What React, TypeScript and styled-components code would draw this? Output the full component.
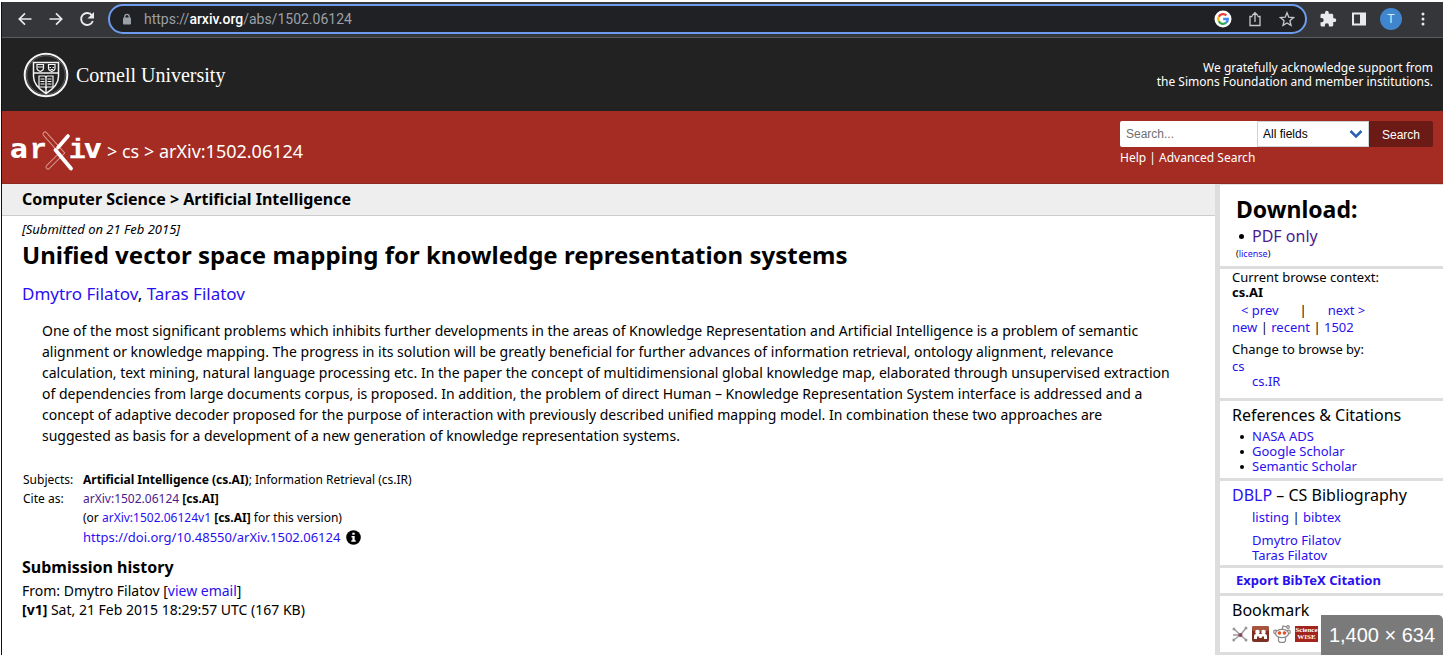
import React from 'react';
import styled, { createGlobalStyle } from 'styled-components';

const sans = `'Noto Sans', 'Open Sans', sans-serif`;
const arial = `'Liberation Sans', Arial, sans-serif`;

const GlobalStyle = createGlobalStyle`
  *, *::before, *::after { box-sizing: border-box; }
  body { margin: 0; background: #fff; color: #000; font-family: ${sans}; font-size: 13px; }
  a { color: #2a0ff0; text-decoration: none; }
  h1, h2, h3, p, ul { margin: 0; padding: 0; }
`;

const Frame = styled.div`
  position: relative;
  margin: 2px 7px 17px 1px;
  border-left: 1px solid #111;
  background: #fff;
`;

/* Browser toolbar */
const Toolbar = styled.div`
  display: flex;
  align-items: center;
  height: 36px;
  padding: 0 10px 2px 13px;
  gap: 11px;
  background: #35363a;
  border-bottom: 1px solid #5a5b5e;
`;

const IconButton = styled.button`
  display: flex;
  align-items: center;
  justify-content: center;
  flex: none;
  width: 20px;
  height: 20px;
  padding: 0;
  border: 0;
  background: none;
  color: #e8eaed;
`;

const AddressBar = styled.div`
  display: flex;
  flex: 1;
  align-items: center;
  height: 30px;
  padding: 0 8px 0 12px;
  gap: 12px;
  border: 2px solid #6c9cf0;
  border-radius: 15px;
  background: #202124;
`;

const Url = styled.div`
  flex: 1;
  font-family: Roboto, ${arial};
  font-size: 14px;
  line-height: 20px;
  color: #9aa0a6;
  b { font-weight: 500; color: #fff; }
`;

const Avatar = styled.button`
  width: 22px;
  height: 22px;
  flex: none;
  padding: 0;
  border: 0;
  border-radius: 50%;
  background: #3f86cf;
  color: #dbe9f8;
  font: 12px/22px ${arial};
`;

/* Site banner */
const Banner = styled.header`
  display: flex;
  align-items: center;
  justify-content: space-between;
  height: 73px;
  padding: 0 10px 0 21px;
  background: #222;
  color: #fff;
`;

const Cornell = styled.a`
  display: flex;
  align-items: center;
  gap: 7px;
  && { color: #fff; }
  font: 20px/28px 'Liberation Serif', serif;
`;

const Support = styled.p`
  text-align: right;
  font-size: 12px;
  line-height: 14px;
`;

const RedBar = styled.div`
  display: flex;
  justify-content: space-between;
  height: 73px;
  padding: 10px 10px 0 8px;
  background: #a42c23;
  border-bottom: 1px solid #8e2a22;
  color: #fff;
  a { color: #fff; }
`;

const Crumbs = styled.div`
  display: flex;
  align-items: center;
  height: 59px;
  gap: 5px;
  font-size: 18px;
  line-height: 24px;
`;

const LogoLink = styled.a`
  display: flex;
`;

const SearchForm = styled.form`
  width: 313px;
  font-size: 12px;
  line-height: 22px;
`;

const SearchRow = styled.div`
  display: flex;
  height: 26px;
  font-family: ${arial};
`;

const SearchInput = styled.input`
  width: 137px;
  padding: 0 6px;
  border: 0;
  border-radius: 2px 0 0 2px;
  background: #fff;
  font: 12px ${arial};
  &::placeholder { color: #6f6f6f; opacity: 1; }
`;

const SelectWrap = styled.label`
  display: grid;
  align-items: center;
  width: 112px;
  border: 1px solid #c9d4d8;
  background: #fff;
  color: #2c62b4;
  select, svg { grid-area: 1 / 1; }
  svg { justify-self: end; margin-right: 5px; pointer-events: none; }
`;

const Select = styled.select`
  appearance: none;
  width: 100%;
  height: 24px;
  padding: 0 5px;
  border: 0;
  background: #fff;
  color: #000;
  font: 12px ${arial};
`;

const SearchButton = styled.button`
  flex: 1;
  padding: 2px 0 0;
  border: 0;
  border-radius: 0 2px 2px 0;
  background: #6b1a15;
  color: #fff;
  font: 12px ${arial};
`;

/* Content */
const Columns = styled.div`
  display: flex;
`;

const Main = styled.main`
  flex: 1;
  min-width: 0;
`;

const Subject = styled.h1`
  height: 32px;
  padding-left: 20px;
  border-bottom: 1px solid #ccc;
  background: #eee;
  font-size: 16px;
  line-height: 31px;
`;

const Article = styled.article`
  padding: 3px 20px 0;
`;

const Dateline = styled.p`
  font-size: 13px;
  line-height: 20px;
  font-style: italic;
`;

const Title = styled.h2`
  font-size: 24px;
  line-height: 32px;
`;

const Authors = styled.p`
  padding-top: 11px;
  font-size: 17px;
  line-height: 24px;
`;

const Abstract = styled.p`
  padding: 14px 0 0 20px;
  font-size: 14px;
  line-height: 21px;
  white-space: nowrap;
`;

const Meta = styled.table`
  margin-top: 24px;
  border-collapse: collapse;
  font-size: 12px;
  line-height: 19px;
  th, td { padding: 0 0 0 1px; text-align: left; vertical-align: top; font-weight: 400; height: 19px; }
  th { width: 60px; }
  td svg { display: block; }
`;

const Doi = styled.div`
  display: flex;
  align-items: center;
  gap: 6px;
  font-size: 13px;
  line-height: 20px;
`;

const History = styled.section`
  padding-top: 7px;
  font-size: 14px;
  line-height: 19px;
  h3 { font-size: 16px; line-height: 27px; }
`;

/* Sidebar */
const Sidebar = styled.aside`
  width: 228px;
  border-left: 5px solid #ddd;
  border-top: 1px solid #ddd;
`;

const Panel = styled.section<{ $h: number; $top?: number; $left?: number }>`
  min-height: ${(p) => p.$h}px;
  padding: ${(p) => p.$top ?? 3}px 0 0 ${(p) => p.$left ?? 12}px;
  border-bottom: 3px solid #ddd;
  font-size: 13px;
  line-height: 15px;
`;

const PanelTitle = styled.h3<{ $big?: boolean }>`
  font-size: ${(p) => (p.$big ? 23 : 16)}px;
  font-weight: ${(p) => (p.$big ? 700 : 400)};
  line-height: ${(p) => (p.$big ? 32 : 22)}px;
`;

const List = styled.ul<{ $big?: boolean }>`
  padding-top: ${(p) => (p.$big ? 0 : 3)}px;
  font-size: ${(p) => (p.$big ? 16 : 13)}px;
  line-height: ${(p) => (p.$big ? 22 : 15)}px;
  list-style: none;
  li { display: flex; align-items: center; padding-left: ${(p) => (p.$big ? 3 : 8)}px; }
  li::before {
    content: '';
    width: ${(p) => (p.$big ? 5 : 4)}px;
    height: ${(p) => (p.$big ? 5 : 4)}px;
    margin-right: 8px;
    border-radius: 50%;
    background: #000;
  }
`;

const Visited = styled.a`
  && { color: #4b1a8f; }
`;

const License = styled.p`
  font-size: 9px;
  line-height: 13px;
`;

const Line = styled.p<{ $indent?: number; $gap?: number; $tall?: boolean }>`
  padding-left: ${(p) => p.$indent ?? 0}px;
  margin-top: ${(p) => p.$gap ?? 0}px;
  line-height: ${(p) => (p.$tall ? 17 : 15)}px;
`;

const PrevNext = styled(Line)`
  display: flex;
  gap: 21px;
`;

const Bookmarks = styled.div`
  display: flex;
  align-items: center;
  gap: 4px;
  padding-top: 4px;
`;

const Wise = styled.a`
  && { color: #fff; }
  width: 23px;
  height: 16px;
  padding-top: 1px;
  background: #a3241d;
  font: 700 7px/7px 'Liberation Serif', serif;
  text-align: center;
`;

const SizeBadge = styled.div`
  position: absolute;
  right: 0;
  bottom: 0;
  width: 122px;
  height: 40px;
  border-top-right-radius: 5px;
  background: rgba(112, 112, 112, 0.93);
  color: #fff;
  font: 20px/40px ${arial};
  text-align: center;
`;

const CornellSeal = () => (
  <svg width="46" height="46" viewBox="0 0 46 46" fill="none" stroke="#f4f4f4">
    <circle cx="23" cy="23" r="21.3" strokeWidth="2" />
    <circle cx="23" cy="23" r="19.3" strokeWidth=".5" opacity=".6" />
    <path d="M10.500 10.500h25v14c0 8-6 13-12.500 17-6.500-4-12.500-9-12.500-17z" strokeWidth="1.500" />
    <path d="M10.500 21h25M23 24v17" strokeWidth="1.400" />
    <path d="M14 12.500h6.500v4c0 1.500-1.500 2.300-3.200 3-1.800-.7-3.300-1.500-3.300-3zM25.500 12.500h6.500v4c0 1.500-1.500 2.300-3.200 3-1.800-.7-3.300-1.500-3.300-3z" strokeWidth="1.200" />
    <path d="M14.500 15h5.500M26.500 15.500h1.500M29.500 15.500h1.500M27.500 17.500h2.500" strokeWidth="1.200" />
    <path d="M16 24h6l1 1 1-1h6v11h-6l-1 1-1-1h-6z" strokeWidth="1.200" />
    <path d="M17.500 27h4M17.500 29.500h4M17.500 32h4M24.500 27h4M24.500 29.500h4M24.500 32h4" strokeWidth="1" />
  </svg>
);

const ArxivLogo = () => (
  <svg width="92" height="42" viewBox="0 0 92 42" role="img" aria-label="arXiv">
    <g fill="#fff" fontWeight="700" fontFamily="'DejaVu Sans', sans-serif" fontSize="27">
      <text x="0" y="28">a</text>
      <text x="74" y="28">v</text>
    </g>
    <g fill="#fff" stroke="#fff" strokeWidth=".3" fontWeight="700" fontFamily="'Liberation Mono', monospace" fontSize="28">
      <text x="20" y="28">r</text>
      <text x="59" y="28">i</text>
    </g>
    <g strokeLinecap="round" fill="none">
      <path d="M35 4L52 23L38 37" stroke="#d9958f" strokeWidth="5" />
      <path d="M35 4L52 23L38 37" stroke="#a42c23" strokeWidth="3" />
      <path d="M58 6L48 17.500" stroke="#fff" strokeWidth="3.600" />
      <path d="M45.500 20L61 38.500" stroke="#fff" strokeWidth="3.800" />
    </g>
  </svg>
);

const GoogleIcon = () => (
  <svg width="18" height="18" viewBox="0 0 18 18" fill="none" strokeWidth="2.300">
    <circle cx="9" cy="9" r="8.500" fill="#fff" />
    <path d="M12.400 5.400A4.800 4.800 0 0 0 4.800 6.700" stroke="#ea4335" />
    <path d="M4.800 6.700a4.800 4.800 0 0 0 0 4.600" stroke="#fbbc05" />
    <path d="M4.800 11.300a4.800 4.800 0 0 0 7.400 1.400" stroke="#34a853" />
    <path d="M12.200 12.700A4.800 4.800 0 0 0 13.800 9H9.200" stroke="#4285f4" />
  </svg>
);

export default function App() {
  return (
    <>
      <GlobalStyle />
      <Frame>
        <Toolbar>
          <IconButton aria-label="Back">
            <svg width="16" height="16" viewBox="0 0 16 16" fill="none" stroke="currentColor" strokeWidth="1.700"><path d="M14.500 8H2.500M8 2.300L2.300 8 8 13.700" /></svg>
          </IconButton>
          <IconButton aria-label="Forward">
            <svg width="16" height="16" viewBox="0 0 16 16" fill="none" stroke="currentColor" strokeWidth="1.700"><path d="M1.500 8h12M8 2.300L13.700 8 8 13.700" /></svg>
          </IconButton>
          <IconButton aria-label="Reload">
            <svg width="16" height="16" viewBox="0 0 16 16"><path d="M13 4.500A6 6 0 1 0 13.800 10" fill="none" stroke="currentColor" strokeWidth="1.900" /><path d="M15 1v6.500H8.500z" fill="currentColor" /></svg>
          </IconButton>
          <AddressBar>
            <svg width="10" height="12" viewBox="0 0 10 12"><path d="M2.800 5V3.500a2.200 2.200 0 0 1 4.400 0V5" fill="none" stroke="#9aa0a6" strokeWidth="1.300" /><rect x="1" y="4.500" width="8" height="7" rx="1" fill="#9aa0a6" /></svg>
            <Url>https://<b>arxiv.org</b>/abs/1502.06124</Url>
            <IconButton aria-label="Google"><GoogleIcon /></IconButton>
            <IconButton aria-label="Share">
              <svg width="16" height="16" viewBox="0 0 16 16" fill="none" stroke="#c4c7cb" strokeWidth="1.300"><path d="M5.500 5.500H3v9h10v-9h-2.500M8 11V2M5.200 4.500L8 1.700l2.800 2.800" /></svg>
            </IconButton>
            <IconButton aria-label="Bookmark this page">
              <svg width="16" height="16" viewBox="0 0 16 16" fill="none" stroke="#c4c7cb" strokeWidth="1.300"><path d="M8 1.700l1.800 4.500 4.700.4-3.600 3.100 1.100 4.700L8 11.900l-4 2.500 1.100-4.700L1.500 6.600l4.700-.4z" /></svg>
            </IconButton>
          </AddressBar>
          <IconButton aria-label="Extensions">
            <svg width="18" height="18" viewBox="0 0 24 24" fill="currentColor"><path d="M20.500 11H19V7c0-1.100-.9-2-2-2h-4V3.500a2.500 2.500 0 0 0-5 0V5H4c-1.100 0-2 .9-2 2v3.800h1.500a2.700 2.700 0 0 1 0 5.400H2V20c0 1.100.9 2 2 2h3.800v-1.500a2.700 2.700 0 0 1 5.400 0V22H17c1.100 0 2-.9 2-2v-4h1.500a2.500 2.500 0 0 0 0-5z" /></svg>
          </IconButton>
          <IconButton aria-label="Side panel">
            <svg width="16" height="16" viewBox="0 0 16 16"><path d="M1 1.500h14v13H1zM3 3.500v9h6v-9z" fill="currentColor" fillRule="evenodd" /></svg>
          </IconButton>
          <Avatar>T</Avatar>
          <IconButton aria-label="Menu">
            <svg width="4" height="16" viewBox="0 0 4 16" fill="currentColor"><circle cx="2" cy="3" r="1.500" /><circle cx="2" cy="8" r="1.500" /><circle cx="2" cy="13" r="1.500" /></svg>
          </IconButton>
        </Toolbar>

        <Banner>
          <Cornell href="#cornell"><CornellSeal />Cornell University</Cornell>
          <Support>We gratefully acknowledge support from<br />the Simons Foundation and member institutions.</Support>
        </Banner>

        <RedBar>
          <Crumbs>
            <LogoLink href="#home"><ArxivLogo /></LogoLink>
            <span>&gt; <a href="#cs">cs</a> &gt; arXiv:1502.06124</span>
          </Crumbs>
          <SearchForm>
            <SearchRow>
              <SearchInput aria-label="Search term" placeholder="Search..." />
              <SelectWrap>
                <Select aria-label="Field to search"><option>All fields</option></Select>
                <svg width="14" height="10" viewBox="0 0 14 10" fill="none" stroke="currentColor" strokeWidth="2.600"><path d="M1.500 2L7 7.500 12.500 2" /></svg>
              </SelectWrap>
              <SearchButton type="button">Search</SearchButton>
            </SearchRow>
            <a href="#help">Help</a> | <a href="#advanced">Advanced Search</a>
          </SearchForm>
        </RedBar>

        <Columns>
          <Main>
            <Subject>Computer Science &gt; Artificial Intelligence</Subject>
            <Article>
              <Dateline>[Submitted on 21 Feb 2015]</Dateline>
              <Title>Unified vector space mapping for knowledge representation systems</Title>
              <Authors><a href="#df">Dmytro Filatov</a>, <a href="#tf">Taras Filatov</a></Authors>
              <Abstract>
                One of the most significant problems which inhibits further developments in the areas of Knowledge Representation and Artificial Intelligence is a problem of semantic<br />
                alignment or knowledge mapping. The progress in its solution will be greatly beneficial for further advances of information retrieval, ontology alignment, relevance<br />
                calculation, text mining, natural language processing etc. In the paper the concept of multidimensional global knowledge map, elaborated through unsupervised extraction<br />
                of dependencies from large documents corpus, is proposed. In addition, the problem of direct Human – Knowledge Representation System interface is addressed and a<br />
                concept of adaptive decoder proposed for the purpose of interaction with previously described unified mapping model. In combination these two approaches are<br />
                suggested as basis for a development of a new generation of knowledge representation systems.
              </Abstract>
              <Meta>
                <tbody>
                  <tr><th scope="row">Subjects:</th><td><b>Artificial Intelligence (cs.AI)</b>; Information Retrieval (cs.IR)</td></tr>
                  <tr><th scope="row">Cite as:</th><td><Visited href="#abs">arXiv:1502.06124</Visited> <b>[cs.AI]</b></td></tr>
                  <tr><th /><td>(or <a href="#v1">arXiv:1502.06124v1</a> <b>[cs.AI]</b> for this version)</td></tr>
                  <tr>
                    <th />
                    <td>
                      <Doi>
                        <a href="#doi">https://doi.org/10.48550/arXiv.1502.06124</a>
                        <svg width="15" height="15" viewBox="0 0 15 15"><circle cx="7.500" cy="7.500" r="7.300" /><path d="M6.300 2.800h2.400v2H6.300zM5.500 6h3.200v4.200h1v1.600H5.300v-1.600h1.100V7.600h-.9z" fill="#fff" /></svg>
                      </Doi>
                    </td>
                  </tr>
                </tbody>
              </Meta>
              <History>
                <h3>Submission history</h3>
                <p>From: Dmytro Filatov [<a href="#email">view email</a>]</p>
                <p><b>[v1]</b> Sat, 21 Feb 2015 18:29:57 UTC (167 KB)</p>
              </History>
            </Article>
          </Main>

          <Sidebar>
            <Panel $h={84} $top={8} $left={16}>
              <PanelTitle $big>Download:</PanelTitle>
              <List $big><li><Visited href="#pdf">PDF only</Visited></li></List>
              <License>(<a href="#license">license</a>)</License>
            </Panel>
            <Panel $h={132} $top={1}>
              <Line>Current browse context:</Line>
              <Line><b>cs.AI</b></Line>
              <PrevNext $indent={9} $gap={2} $tall><a href="#prev">&lt; prev</a><span>|</span><a href="#next">next &gt;</a></PrevNext>
              <Line $tall><a href="#new">new</a> | <a href="#recent">recent</a> | <a href="#1502">1502</a></Line>
              <Line $gap={6}>Change to browse by:</Line>
              <Line $gap={2}><a href="#cs">cs</a></Line>
              <Line $indent={20}><a href="#ir">cs.IR</a></Line>
            </Panel>
            <Panel $h={80}>
              <PanelTitle>References &amp; Citations</PanelTitle>
              <List>
                <li><a href="#ads">NASA ADS</a></li>
                <li><a href="#scholar">Google Scholar</a></li>
                <li><a href="#semantic">Semantic Scholar</a></li>
              </List>
            </Panel>
            <Panel $h={87}>
              <PanelTitle><a href="#dblp">DBLP</a> – CS Bibliography</PanelTitle>
              <Line $indent={20} $gap={4}><a href="#listing">listing</a> | <a href="#bibtex">bibtex</a></Line>
              <Line $indent={20} $gap={8}><a href="#df2">Dmytro Filatov</a></Line>
              <Line $indent={20}><a href="#tf2">Taras Filatov</a></Line>
            </Panel>
            <Panel $h={28} $top={5} $left={16}>
              <a href="#export"><b>Export BibTeX Citation</b></a>
            </Panel>
            <Panel $h={59}>
              <PanelTitle>Bookmark</PanelTitle>
              <Bookmarks>
                <svg width="16" height="16" viewBox="0 0 16 16" stroke="#999" strokeWidth="1.400" fill="#999"><path d="M8.500 9L2 3M8.500 9L14 2M8.500 9L1.500 14M8.500 9l5.500 5M8.500 9L1 9" fill="none" /><circle cx="2" cy="3" r=".8" /><circle cx="14" cy="2" r=".8" /><circle cx="14" cy="14" r=".8" /><circle cx="1.800" cy="14" r=".8" /><circle cx="8.500" cy="9" r="1.300" fill="#a03060" stroke="#8a4a60" /></svg>
                <svg width="17" height="16" viewBox="0 0 17 16"><rect width="17" height="16" rx="2" fill="#7c3021" /><rect width="17" height="5" rx="2" fill="#a8553f" /><path d="M2 13V10q0-2 2-2h9q2 0 2 2v3h-3v-2.500H9.800v1.500H7.200v-1.500H5V13z" fill="#fff" /><circle cx="5.500" cy="6" r="2.300" fill="#fff" /><circle cx="11.500" cy="6" r="2.300" fill="#fff" /></svg>
                <svg width="18" height="18" viewBox="0 0 18 18" fill="#fff" stroke="#888" strokeWidth="1.200"><path d="M9 5l1-4 4 1" fill="none" /><circle cx="15" cy="2" r="1.300" /><circle cx="2.500" cy="7" r="1.800" /><circle cx="15.500" cy="7" r="1.800" /><path d="M5.500 11h7v5l-1.500 1.400H7L5.500 16z" /><ellipse cx="9" cy="8.500" rx="6.500" ry="4.200" /><circle cx="6.500" cy="8" r="1.200" fill="#e8501e" stroke="#e8501e" /><circle cx="11.500" cy="8" r="1.200" fill="#e8501e" stroke="#e8501e" /></svg>
                <Wise href="#wise">Science WISE</Wise>
              </Bookmarks>
            </Panel>
          </Sidebar>
        </Columns>
        <SizeBadge>1,400 × 634</SizeBadge>
      </Frame>
    </>
  );
}
